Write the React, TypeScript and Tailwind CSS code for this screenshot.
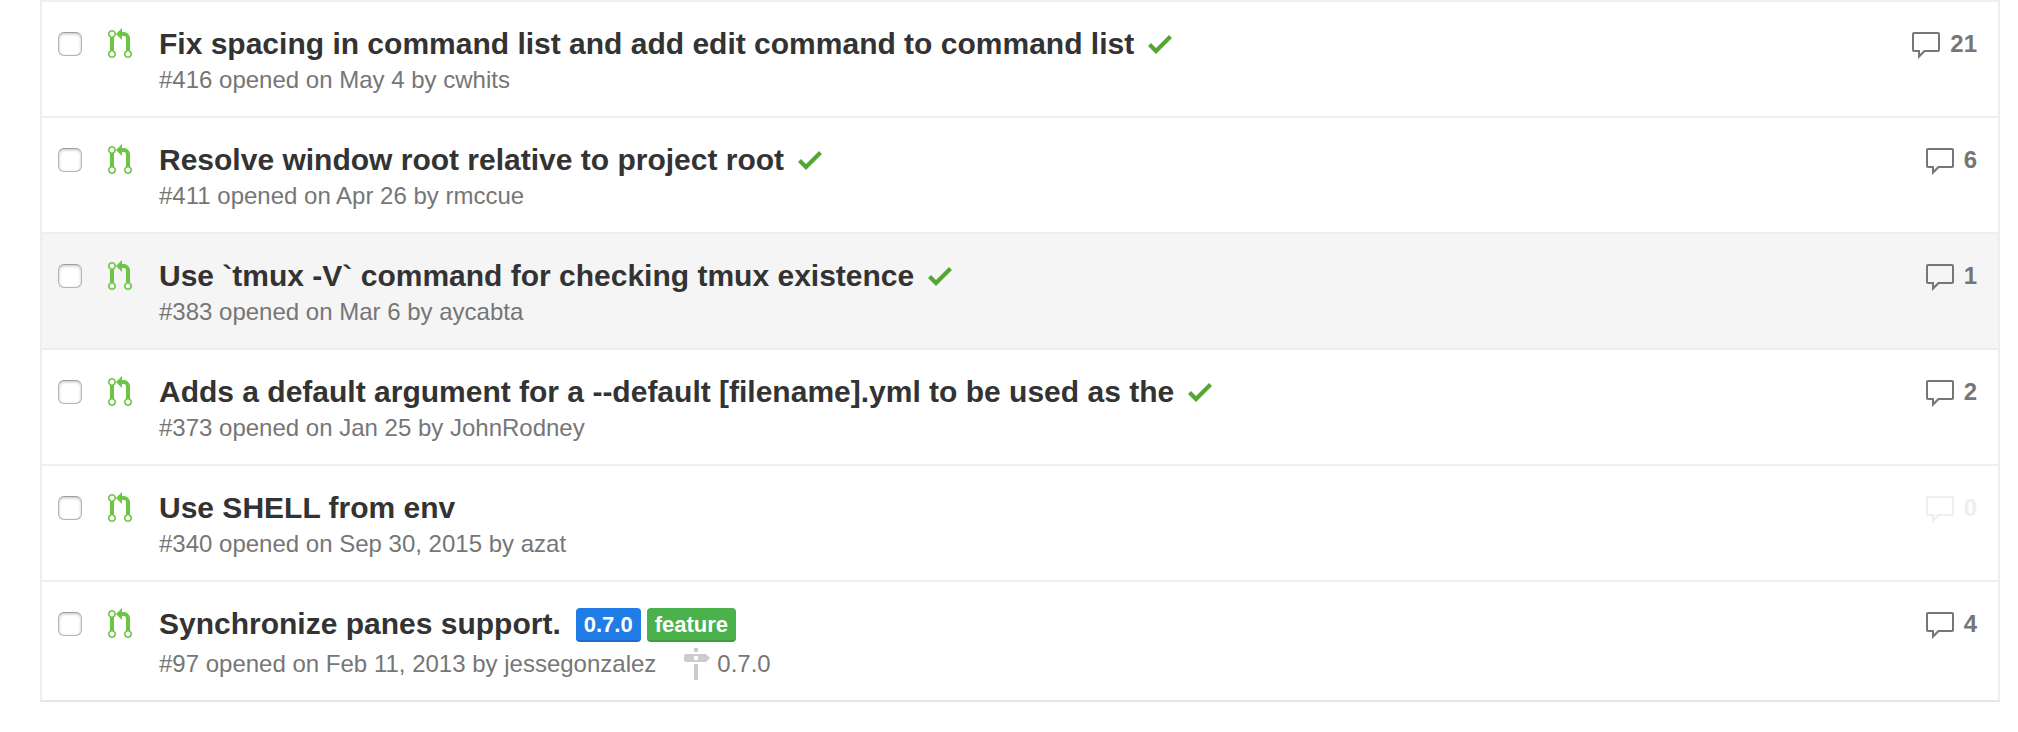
type Label = { name: string; className: string };

type PullRequest = {
  number: number;
  title: string;
  date: string;
  author: string;
  comments: number;
  passed?: boolean;
  selected?: boolean;
  labels?: Label[];
  milestone?: string;
};

const pulls: PullRequest[] = [
  { number: 416, title: "Fix spacing in command list and add edit command to command list", date: "May 4", author: "cwhits", comments: 21, passed: true },
  { number: 411, title: "Resolve window root relative to project root", date: "Apr 26", author: "rmccue", comments: 6, passed: true },
  { number: 383, title: "Use `tmux -V` command for checking tmux existence", date: "Mar 6", author: "aycabta", comments: 1, passed: true, selected: true },
  { number: 373, title: "Adds a default argument for a --default [filename].yml to be used as the", date: "Jan 25", author: "JohnRodney", comments: 2, passed: true },
  { number: 340, title: "Use SHELL from env", date: "Sep 30, 2015", author: "azat", comments: 0 },
  {
    number: 97,
    title: "Synchronize panes support.",
    date: "Feb 11, 2013",
    author: "jessegonzalez",
    comments: 4,
    labels: [
      { name: "0.7.0", className: "bg-[#207de5]" },
      { name: "feature", className: "bg-[#4bb14b]" },
    ],
    milestone: "0.7.0",
  },
];

function PullRequestIcon() {
  return (
    <svg className="h-8 w-6 shrink-0 text-[#6cc644]" viewBox="0 0 12 16" fill="currentColor" aria-hidden="true">
      <path d="M11 11.28V5c-.03-.78-.34-1.47-.94-2.06C9.46 2.35 8.78 2.03 8 2H7V0L4 3l3 3V4h1c.27.02.48.11.69.31.21.2.3.42.31.69v6.28A1.993 1.993 0 0 0 10 15a1.993 1.993 0 0 0 1-3.72zm-1 2.92c-.66 0-1.2-.55-1.2-1.2 0-.65.55-1.2 1.2-1.2.65 0 1.2.55 1.2 1.2 0 .65-.55 1.2-1.2 1.2zM4 3c0-1.11-.89-2-2-2a1.993 1.993 0 0 0-1 3.72v6.56A1.993 1.993 0 0 0 2 15a1.993 1.993 0 0 0 1-3.72V4.72c.59-.34 1-.98 1-1.72zm-.8 10c0 .66-.55 1.2-1.2 1.2-.65 0-1.2-.55-1.2-1.2 0-.65.55-1.2 1.2-1.2.65 0 1.2.55 1.2 1.2zM2 4.2C1.34 4.2.8 3.65.8 3c0-.65.55-1.2 1.2-1.2.65 0 1.2.55 1.2 1.2 0 .65-.55 1.2-1.2 1.2z" />
    </svg>
  );
}

function CheckIcon() {
  return (
    <svg className="h-8 w-6 shrink-0 text-[#55a532]" viewBox="0 0 12 16" fill="currentColor" role="img" aria-label="Checks passed">
      <path d="M12 5l-8 8-4-4 1.5-1.5L4 10l6.5-6.5z" />
    </svg>
  );
}

function CommentIcon() {
  return (
    <svg className="mt-0.5 h-8 w-8 shrink-0" viewBox="0 0 16 16" fill="currentColor" aria-hidden="true">
      <path d="M14 1H2c-.55 0-1 .45-1 1v8c0 .55.45 1 1 1h2v3.5L7.5 11H14c.55 0 1-.45 1-1V2c0-.55-.45-1-1-1zm0 9H7l-2 2v-2H2V2h12v8z" />
    </svg>
  );
}

function MilestoneIcon() {
  return (
    <svg className="h-8 w-7 shrink-0 text-[#cccccc]" viewBox="0 0 14 16" fill="currentColor" aria-hidden="true">
      <path d="M8 2H6V0h2v2zm4 5H2c-.55 0-1-.45-1-1V4c0-.55.45-1 1-1h10l2 2-2 2zM8 4H6v2h2V4zM6 16h2V8H6v8z" />
    </svg>
  );
}

function PullRow({ pull }: { pull: PullRequest }) {
  return (
    <li className={`flex items-start border-t-2 border-[#eeeeee] pt-6 pr-[21px] pb-[18px] pl-4 ${pull.selected ? "bg-[#f5f5f5]" : "bg-white"}`}>
      <input
        type="checkbox"
        aria-label={`Select #${pull.number}`}
        className="mt-1.5 size-6 shrink-0 appearance-none rounded-md border border-[#b4b4b4] border-t-[#a0a0a0] bg-white shadow-[inset_0_1px_3px_rgba(0,0,0,0.25)]"
      />
      <div className="ml-[26px] pt-0.5">
        <PullRequestIcon />
      </div>
      <div className="ml-[27px] min-w-0 grow">
        <div className="flex h-9 items-center">
          <a href="#" className="text-[30px] leading-9 font-bold text-[#333333]">
            {pull.title}
          </a>
          {pull.passed && (
            <a href="#" className="ml-3.5">
              <CheckIcon />
            </a>
          )}
          {pull.labels && (
            <span className="mt-0.5 ml-[15px] flex gap-1.5">
              {pull.labels.map((label) => (
                <a
                  key={label.name}
                  href="#"
                  className={`rounded-sm px-2 text-[22px] leading-[34px] font-bold text-white shadow-[inset_0_-2px_0_rgba(0,0,0,0.12)] ${label.className}`}
                >
                  {label.name}
                </a>
              ))}
            </span>
          )}
        </div>
        <div className={`flex h-9 items-center text-2xl text-[#767676] ${pull.milestone ? "mt-1" : ""}`}>
          <span>
            #{pull.number} opened on {pull.date} by{" "}
            <a href="#">{pull.author}</a>
          </span>
          {pull.milestone && (
            <a href="#" className="ml-[26px] flex items-center gap-[7px]">
              <MilestoneIcon />
              {pull.milestone}
            </a>
          )}
        </div>
      </div>
      <a
        href="#"
        className={`flex items-start gap-2 pt-0.5 text-2xl font-bold ${pull.comments ? "text-[#767676]" : "text-[#eeeeee]"}`}
      >
        <CommentIcon />
        {pull.comments}
      </a>
    </li>
  );
}

export default function App() {
  return (
    <main className="min-h-screen bg-white pr-[18px] pl-10 font-['Liberation_Sans',Arial,sans-serif]">
      <ul className="border-x-2 border-b-2 border-x-[#eeeeee] border-b-[#e5e5e5]">
        {pulls.map((pull) => (
          <PullRow key={pull.number} pull={pull} />
        ))}
      </ul>
    </main>
  );
}
